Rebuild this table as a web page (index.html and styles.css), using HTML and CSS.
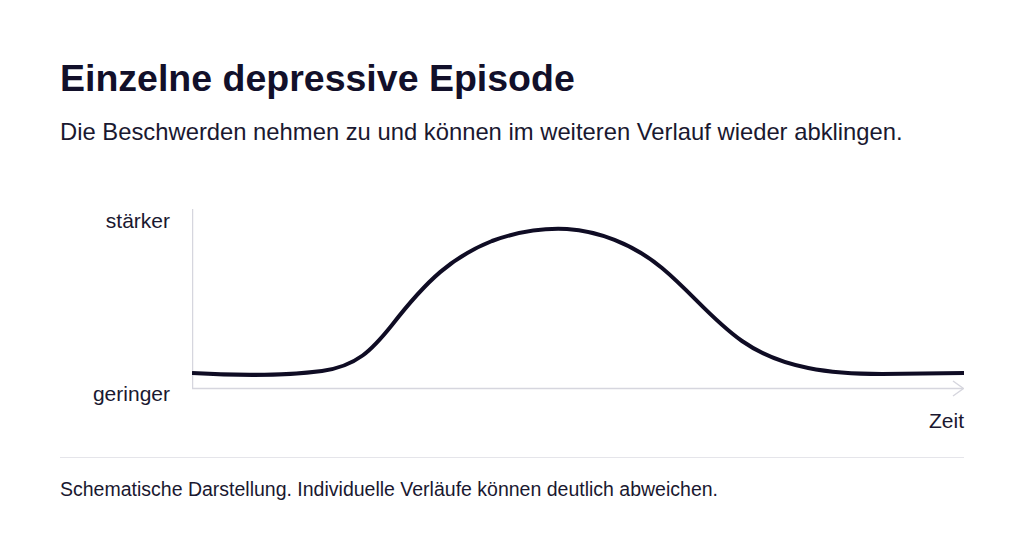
FILE: index.html
```html
<!DOCTYPE html>
<html lang="de">
<head>
<meta charset="utf-8">
<title>Einzelne depressive Episode</title>
<link rel="stylesheet" href="styles.css">
</head>
<body>
<main class="page">
  <h1 class="title">Einzelne depressive Episode</h1>
  <p class="lead">Die Beschwerden nehmen zu und können im weiteren Verlauf wieder abklingen.</p>

  <section class="chart">
    <div class="chart-row">
      <div class="y-labels">
        <span class="label">stärker</span>
        <span class="label">geringer</span>
      </div>
      <svg class="plot" width="772" height="201" viewBox="0 0 772 201" aria-hidden="true">
        <line class="axis" x1="0.5" y1="4" x2="0.5" y2="183.5"/>
        <line class="axis" x1="0" y1="183.5" x2="771" y2="183.5"/>
        <polyline class="axis" points="761,176 771.5,183.5 761,191"/>
        <path class="curve" d="M0,168 C50,171 100,170 130,166 C165,161 180,145 200,120 C235,75 260,52 300,36 C330,25 355,23 375,24 C405,26 440,38 470,63 C500,88 520,115 550,136 C590,164 640,169 690,169 L772,168"/>
      </svg>
    </div>
    <div class="x-label">Zeit</div>
  </section>

  <p class="note">Schematische Darstellung. Individuelle Verläufe können deutlich abweichen.</p>
</main>
</body>
</html>
```

FILE: styles.css
```css
html, body {
  margin: 0;
  padding: 0;
  background: #ffffff;
}

body {
  font-family: "Liberation Sans", Arial, Helvetica, sans-serif;
  color: #16142e;
}

.page {
  padding: 56px 60px 0 60px;
}

.title {
  margin: 0;
  font-size: 37.5px;
  line-height: 44px;
  font-weight: 700;
  color: #12102a;
}

.lead {
  margin: 16px 0 0 0;
  font-size: 23.8px;
  line-height: 32px;
  color: #1a1830;
}

.chart {
  margin-top: 57px;
}

.chart-row {
  display: flex;
  gap: 22px;
  align-items: stretch;
}

.y-labels {
  width: 110px;
  display: flex;
  flex-direction: column;
  justify-content: space-between;
  align-items: flex-end;
  padding-top: 4px;
}

.label,
.x-label {
  font-size: 21px;
  line-height: 24px;
  color: #1a1830;
}

.plot {
  display: block;
  flex: none;
}

.axis {
  fill: none;
  stroke: #d6d6de;
  stroke-width: 1.5;
}

.curve {
  fill: none;
  stroke: #0f0c24;
  stroke-width: 4;
  stroke-linejoin: round;
}

.x-label {
  margin-top: 3px;
  text-align: right;
  padding-bottom: 24px;
  border-bottom: 1px solid #e5e5ea;
}

.note {
  margin: 0;
  padding-top: 19px;
  font-size: 19.5px;
  line-height: 24px;
  color: #1a1830;
}
```
